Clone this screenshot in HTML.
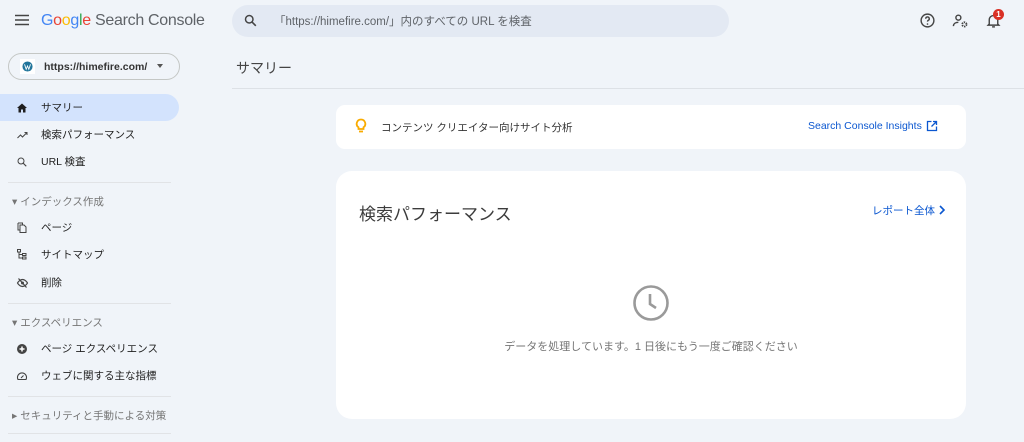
<!DOCTYPE html>
<html><head><meta charset="utf-8"><style>
*{margin:0;padding:0;box-sizing:border-box}
body{width:1024px;height:442px;overflow:hidden;background:#f0f4f9;font-family:"Liberation Sans","Noto Sans CJK JP",sans-serif;color:#1f1f1f;position:relative}
.a{position:absolute}
.nav{position:absolute;left:0;width:180px;height:27px;font-size:10.5px;color:#1f1f1f;display:flex;align-items:center}
.nav svg{position:absolute;left:16px}
.nav span{position:absolute;left:41px}
.sec{position:absolute;left:12px;font-size:10.5px;color:#757575}
.div{position:absolute;left:8px;width:163px;height:1px;background:#e1e3e6}
</style></head><body>
<svg class="a" style="left:14px;top:14px" width="16" height="12" viewBox="0 0 16 12"><path d="M1 1.5h14M1 6h14M1 10.5h14" stroke="#444" stroke-width="1.6"/></svg>
<div class="a" style="left:41px;top:12px;font-size:16px;letter-spacing:-0.3px"><span style="color:#4285f4">G</span><span style="color:#ea4335">o</span><span style="color:#fbbc05">o</span><span style="color:#4285f4">g</span><span style="color:#34a853">l</span><span style="color:#ea4335">e</span> <span style="color:#5f6368">Search Console</span></div>
<div class="a" style="left:232px;top:5px;width:497px;height:32px;border-radius:16px;background:#e3e9f3"></div>
<svg class="a" style="left:243px;top:13px" width="15" height="15" viewBox="0 0 24 24"><circle cx="10" cy="10" r="6" fill="none" stroke="#444" stroke-width="2.4"/><path d="M14.5 14.5l6 6" stroke="#444" stroke-width="2.6"/></svg>
<div class="a" style="left:274px;top:13px;font-size:11.5px;color:#5f6368">「https://himefire.com/」内のすべての URL を検査</div>
<svg class="a" style="left:919px;top:12px" width="17" height="17" viewBox="0 0 24 24"><circle cx="12" cy="12" r="9" fill="none" stroke="#444" stroke-width="2"/><path d="M9.5 9.5a2.5 2.5 0 1 1 3.5 2.3c-.7.4-1 .9-1 1.7" fill="none" stroke="#444" stroke-width="2"/><circle cx="12" cy="17" r="1.2" fill="#444"/></svg>
<svg class="a" style="left:952px;top:12px" width="17" height="17" viewBox="0 0 24 24"><circle cx="9" cy="8" r="3.5" fill="none" stroke="#444" stroke-width="2"/><path d="M2 20c0-3.5 3-5.5 7-5.5" fill="none" stroke="#444" stroke-width="2"/><circle cx="17.5" cy="17.5" r="3" fill="none" stroke="#444" stroke-width="2.5" stroke-dasharray="2 1.2"/></svg>
<svg class="a" style="left:985px;top:12px" width="17" height="17" viewBox="0 0 24 24"><path d="M6 17V11a6 6 0 0 1 12 0v6l1.5 1.5h-15z" fill="none" stroke="#444" stroke-width="2"/><path d="M10 21h4" stroke="#444" stroke-width="2"/></svg>
<div class="a" style="left:993px;top:9px;width:11px;height:11px;border-radius:50%;background:#d93025;color:#fff;font-size:8px;text-align:center;line-height:11px;font-weight:bold">1</div>
<div class="a" style="left:8px;top:53px;width:172px;height:27px;border:1px solid #c4c7c5;border-radius:14px"></div>
<div class="a" style="left:20px;top:59px;width:15px;height:15px;background:#fff"></div>
<svg class="a" style="left:22px;top:61px" width="11" height="11" viewBox="0 0 10 10"><circle cx="5" cy="5" r="4.6" fill="#21759b"/><path d="M2.3 3l1.5 4.5L5 4.5l1.2 3L7.7 3" fill="none" stroke="#fff" stroke-width=".8"/></svg>
<div class="a" style="left:44px;top:61px;font-size:10.5px;font-weight:bold;color:#333">https://himefire.com/</div>
<div class="a" style="left:157px;top:64px;width:0;height:0;border-left:3.5px solid transparent;border-right:3.5px solid transparent;border-top:4px solid #555"></div>
<div class="a" style="left:0;top:94px;width:179px;height:27px;background:#d3e3fd;border-radius:0 14px 14px 0"></div>
<div class="nav" style="top:94px"><svg width="12" height="12" viewBox="0 0 24 24"><path d="M12 3L2 12h3v9h5v-6h4v6h5v-9h3z" fill="#1f1f1f"/></svg><span>サマリー</span></div>
<div class="nav" style="top:121px"><svg width="13" height="12" viewBox="0 0 24 24"><path d="M2 18l6-6 4 4 8-8M16 7h5v5" fill="none" stroke="#444" stroke-width="2"/></svg><span>検索パフォーマンス</span></div>
<div class="nav" style="top:148px"><svg width="12" height="12" viewBox="0 0 24 24"><circle cx="10" cy="10" r="6" fill="none" stroke="#444" stroke-width="2"/><path d="M14.5 14.5l6 6" stroke="#444" stroke-width="2.4"/></svg><span>URL 検査</span></div>
<div class="div" style="top:182px"></div>
<div class="sec" style="top:194px">▾ インデックス作成</div>
<div class="nav" style="top:214px"><svg width="12" height="13" viewBox="0 0 24 24"><path d="M4 3h9v3M4 3v14h3M8 7h8l4 4v11H8z" fill="none" stroke="#444" stroke-width="2"/></svg><span>ページ</span></div>
<div class="nav" style="top:241px"><svg width="12" height="13" viewBox="0 0 24 24"><rect x="3" y="2" width="6" height="5" fill="none" stroke="#444" stroke-width="2"/><rect x="13" y="10" width="7" height="4" fill="none" stroke="#444" stroke-width="2"/><rect x="13" y="17" width="7" height="4" fill="none" stroke="#444" stroke-width="2"/><path d="M6 7v12h7M6 12h7" fill="none" stroke="#444" stroke-width="2"/></svg><span>サイトマップ</span></div>
<div class="nav" style="top:269px"><svg width="13" height="12" viewBox="0 0 24 24"><path d="M2 12s4-7 10-7 10 7 10 7-4 7-10 7S2 12 2 12z" fill="none" stroke="#444" stroke-width="2.4"/><circle cx="12" cy="12" r="3" fill="#444"/><path d="M4 3l16 18" stroke="#444" stroke-width="2.4"/></svg><span>削除</span></div>
<div class="div" style="top:303px"></div>
<div class="sec" style="top:315px">▾ エクスペリエンス</div>
<div class="nav" style="top:335px"><svg width="12" height="12" viewBox="0 0 24 24"><circle cx="12" cy="12" r="10" fill="#444"/><path d="M12 7v10M7 12h10" stroke="#fff" stroke-width="3"/></svg><span>ページ エクスペリエンス</span></div>
<div class="nav" style="top:362px"><svg width="12" height="12" viewBox="0 0 24 24"><path d="M4 19a9 9 0 1 1 16 0z" fill="none" stroke="#444" stroke-width="2.2"/><path d="M10 16l5-5" stroke="#444" stroke-width="2.2"/></svg><span>ウェブに関する主な指標</span></div>
<div class="div" style="top:396px"></div>
<div class="sec" style="top:408px">▸ セキュリティと手動による対策</div>
<div class="div" style="top:433px"></div>
<div class="a" style="left:236px;top:58px;font-size:14px;color:#444">サマリー</div>
<div class="a" style="left:232px;top:88px;width:792px;height:1px;background:#dde1e6"></div>
<div class="a" style="left:336px;top:105px;width:630px;height:44px;background:#fff;border-radius:9px"></div>
<svg class="a" style="left:355px;top:118px" width="12" height="16" viewBox="0 0 12 16"><path d="M6 1.5a4.3 4.3 0 0 0-2.5 7.8V11h5V9.3A4.3 4.3 0 0 0 6 1.5z" fill="none" stroke="#f9ab00" stroke-width="1.8"/><path d="M4 13.5h4" stroke="#f9ab00" stroke-width="1.8"/></svg>
<div class="a" style="left:381px;top:120px;font-size:10.5px;color:#333">コンテンツ クリエイター向けサイト分析</div>
<div class="a" style="left:808px;top:120px;font-size:10.5px;color:#0b57d0">Search Console Insights</div>
<svg class="a" style="left:926px;top:120px" width="12" height="12" viewBox="0 0 24 24"><path d="M11 3H3v18h18v-8M14 3h7v7M21 3L11 13" fill="none" stroke="#0b57d0" stroke-width="2.6"/></svg>
<div class="a" style="left:336px;top:171px;width:630px;height:248px;background:#fff;border-radius:16px"></div>
<div class="a" style="left:359px;top:200px;font-size:17px;color:#3c3c3c">検索パフォーマンス</div>
<div class="a" style="left:872px;top:203px;font-size:10.5px;color:#0b57d0">レポート全体</div>
<svg class="a" style="left:938px;top:205px" width="8" height="10" viewBox="0 0 8 10"><path d="M2 1l4 4-4 4" fill="none" stroke="#0b57d0" stroke-width="1.6"/></svg>
<svg class="a" style="left:632px;top:284px" width="38" height="38" viewBox="0 0 38 38"><circle cx="19" cy="19" r="16.5" fill="none" stroke="#9a9a9a" stroke-width="2.6"/><path d="M18 10v10l6 4" fill="none" stroke="#9a9a9a" stroke-width="2.6"/></svg>
<div class="a" style="left:336px;width:630px;top:338px;text-align:center;font-size:11px;color:#757575">データを処理しています。1 日後にもう一度ご確認ください</div>
</body></html>
